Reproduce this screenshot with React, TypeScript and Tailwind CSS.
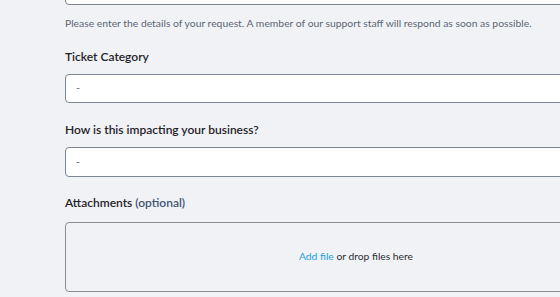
export default function App() {
  return (
    <div className="h-[297px] w-[560px] overflow-hidden bg-[#f1f2f6] font-['Lato',sans-serif]">
      <div className="ml-[65px] w-[582px]">
        {/* subject input, mostly scrolled off the top */}
        <div className="mt-[-25px] h-[30px] rounded-[4px] border border-[#7d8694] bg-white" />

        <p className="mt-[10px] text-[10.35px] leading-[16px] text-[#5c6775]">
          Please enter the details of your request. A member of our support staff will respond as soon as possible.
        </p>

        {/* Ticket category */}
        <label className="mt-[16px] block text-[12px] font-semibold leading-[20px] text-[#1f2328]">
          Ticket Category
        </label>
        <div className="mt-[7px] flex h-[29px] items-center rounded-[4px] border border-[#7d8694] bg-white px-[10px] text-[11px] text-[#6b7280]">
          -
        </div>

        {/* Impact */}
        <label className="mt-[17px] block text-[12px] font-semibold leading-[20px] text-[#1f2328]">
          How is this impacting your business?
        </label>
        <div className="mt-[7px] flex h-[30px] items-center rounded-[4px] border border-[#7d8694] bg-white px-[10px] text-[11px] text-[#6b7280]">
          -
        </div>

        {/* Attachments */}
        <label className="mt-[16px] block text-[12px] font-semibold leading-[20px] text-[#1f2328]">
          Attachments <span className="text-[#3d5573]">(optional)</span>
        </label>
        <div className="mt-[9px] flex h-[70px] items-center justify-center rounded-[4px] border border-[#8a8d92] text-[10.3px] text-[#2b2f33]">
          <span>
            <a className="text-[#1c9ee0]">Add file</a> or drop files here
          </span>
        </div>
      </div>
    </div>
  );
}
